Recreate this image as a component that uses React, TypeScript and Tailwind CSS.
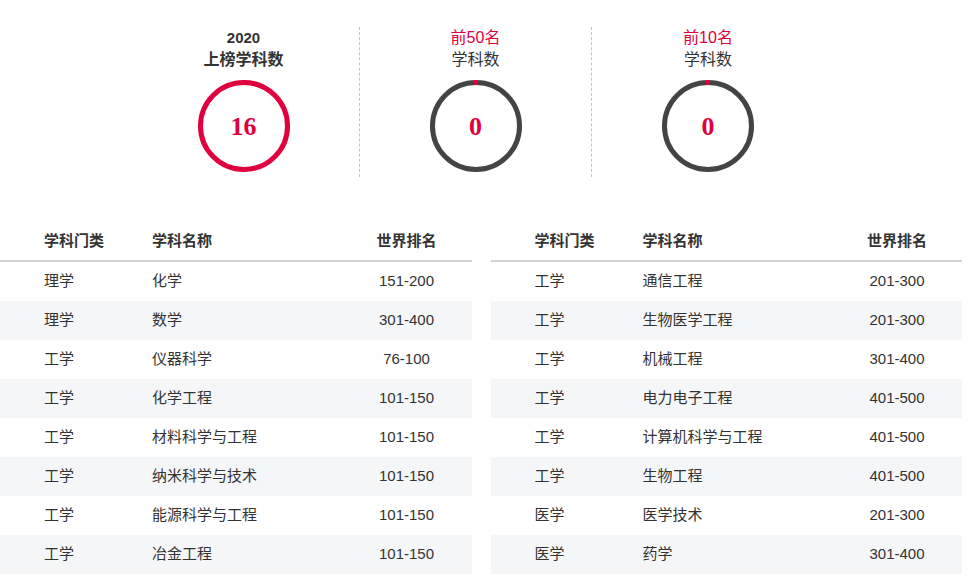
import React from "react";

interface Row {
  category: string;
  name: string;
  rank: string;
}

const leftRows: Row[] = [
  { category: "理学", name: "化学", rank: "151-200" },
  { category: "理学", name: "数学", rank: "301-400" },
  { category: "工学", name: "仪器科学", rank: "76-100" },
  { category: "工学", name: "化学工程", rank: "101-150" },
  { category: "工学", name: "材料科学与工程", rank: "101-150" },
  { category: "工学", name: "纳米科学与技术", rank: "101-150" },
  { category: "工学", name: "能源科学与工程", rank: "101-150" },
  { category: "工学", name: "冶金工程", rank: "101-150" },
];

const rightRows: Row[] = [
  { category: "工学", name: "通信工程", rank: "201-300" },
  { category: "工学", name: "生物医学工程", rank: "201-300" },
  { category: "工学", name: "机械工程", rank: "301-400" },
  { category: "工学", name: "电力电子工程", rank: "401-500" },
  { category: "工学", name: "计算机科学与工程", rank: "401-500" },
  { category: "工学", name: "生物工程", rank: "401-500" },
  { category: "医学", name: "医学技术", rank: "201-300" },
  { category: "医学", name: "药学", rank: "301-400" },
];

const Ring = ({ value, full }: { value: number; full: boolean }) => (
  <div className="relative w-[92px] h-[92px]">
    <svg width="92" height="92" viewBox="0 0 92 92" className="absolute inset-0">
      <circle
        cx="46"
        cy="46"
        r="43.5"
        fill="none"
        stroke={full ? "#e0003d" : "#444444"}
        strokeWidth="5"
      />
      {!full && <rect x="44" y="0" width="4" height="5" fill="#e0003d" />}
    </svg>
    <div className="absolute inset-0 flex items-center justify-center font-['Liberation_Serif',serif] font-bold text-[26px] text-[#e0003d]">
      {value}
    </div>
  </div>
);

const Table = ({ rows }: { rows: Row[] }) => (
  <div className="w-full">
    <div className="flex items-center h-[41px] pt-[1px] border-b-2 border-[#d2d2d2] font-bold text-[15px] text-[#333]">
      <div className="w-[108px] pl-[44px] box-content shrink-0">学科门类</div>
      <div className="flex-1">学科名称</div>
      <div className="w-[120px] text-center mr-[5px]">世界排名</div>
    </div>
    {rows.map((r, i) => (
      <div
        key={i}
        className={`flex items-center h-[39px] text-[15px] text-[#333] ${i % 2 === 1 ? "bg-[#f5f6f8]" : "bg-white"}`}
      >
        <div className="w-[108px] pl-[44px] box-content shrink-0">{r.category}</div>
        <div className="flex-1">{r.name}</div>
        <div className="w-[120px] text-center mr-[5px]">{r.rank}</div>
      </div>
    ))}
  </div>
);

export default function App() {
  return (
    <div className="w-[968px] h-[581px] bg-white overflow-hidden font-['Liberation_Sans','Noto_Sans_CJK_SC',sans-serif]">
      <div className="flex pl-[128px] pt-[27px]">
        <div className="w-[232px] h-[150px] border-r border-dashed border-[#c4c4c4] flex flex-col items-center">
          <div className="font-bold text-[15px] leading-[21px] text-[#333]">2020</div>
          <div className="font-bold text-[16px] leading-[21px] text-[#333] mt-[1px]">上榜学科数</div>
          <div className="mt-[10px]">
            <Ring value={16} full />
          </div>
        </div>
        <div className="w-[232px] h-[150px] border-r border-dashed border-[#c4c4c4] flex flex-col items-center">
          <div className="text-[16px] leading-[21px] text-[#e0003d]">前50名</div>
          <div className="text-[16px] leading-[21px] text-[#333] mt-[1px]">学科数</div>
          <div className="mt-[10px]">
            <Ring value={0} full={false} />
          </div>
        </div>
        <div className="w-[232px] h-[150px] flex flex-col items-center">
          <div className="text-[16px] leading-[21px] text-[#e0003d]">前10名</div>
          <div className="text-[16px] leading-[21px] text-[#333] mt-[1px]">学科数</div>
          <div className="mt-[10px]">
            <Ring value={0} full={false} />
          </div>
        </div>
      </div>
      <div className="w-[962px] grid grid-cols-2 gap-[19px] mt-[44px]">
        <Table rows={leftRows} />
        <Table rows={rightRows} />
      </div>
    </div>
  );
}
